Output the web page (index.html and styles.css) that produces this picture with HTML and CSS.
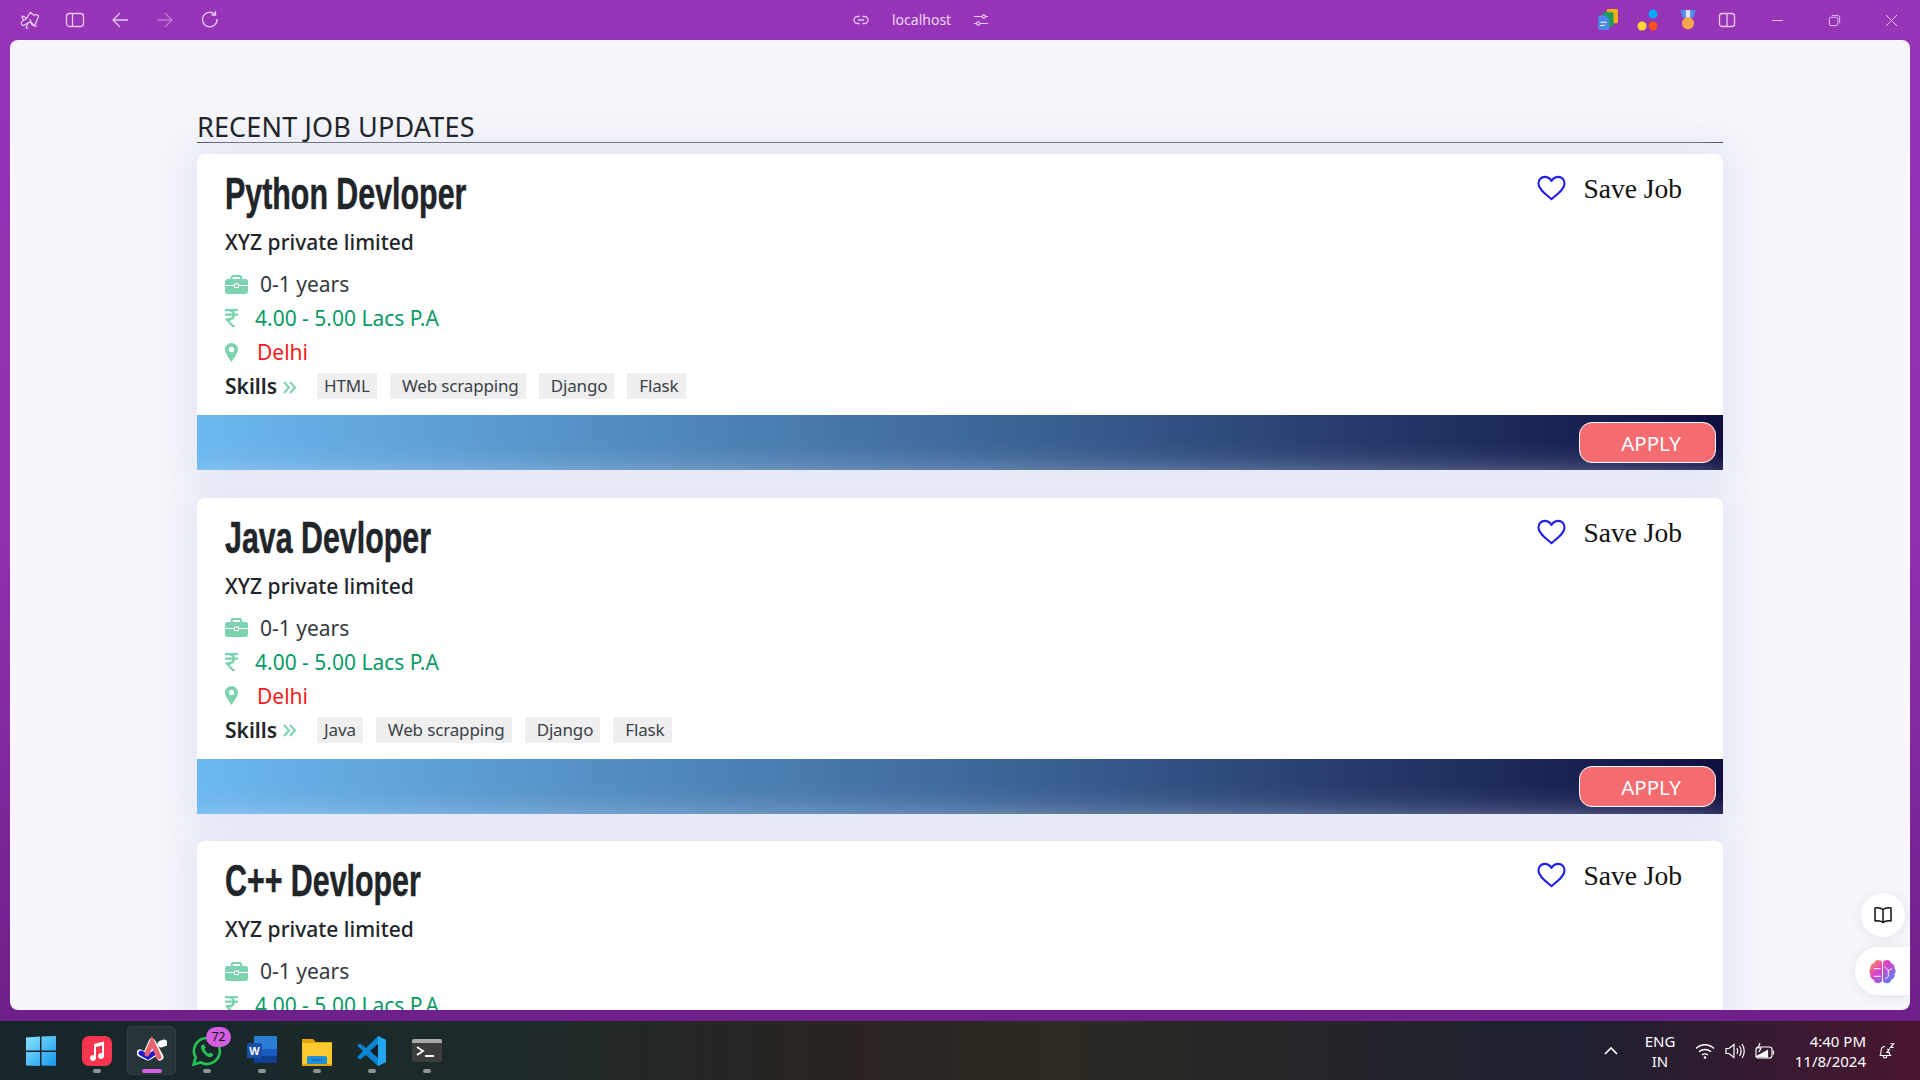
FILE: index.html
```html
<!DOCTYPE html>
<html lang="en">
<head>
    <meta charset="UTF-8">
    <meta name="viewport" content="width=device-width, initial-scale=1.0">
    <title>Job Updates</title>
    <link rel="stylesheet" href="styles.css">
</head>
<body>
    <svg class="defs" width="0" height="0">
        <defs>
            <linearGradient id="win-g" x1="0" y1="0" x2="1" y2="1"><stop offset="0" stop-color="#8be3fb"/><stop offset="1" stop-color="#1597f0"/></linearGradient>
        </defs>
        <symbol id="i-case" viewBox="0 0 23 19">
            <path d="M8 0h7c1.300 0 2.300 1 2.300 2.300V4h3.200C22 4 23 5 23 6.400V10h-9V8.500H9V10H0V6.400C0 5 1 4 2.500 4h3.200V2.300C5.700 1 6.700 0 8 0zm.3 2.100c-.4 0-.6.200-.6.600V4h7.600V2.700c0-.4-.2-.6-.6-.6H8.300zM0 11h9v2h5v-2h9v5.600c0 1.300-1 2.400-2.500 2.400h-18C1 19 0 17.900 0 16.600V11zm10-1.500h3V12h-3V9.500z"/>
        </symbol>
        <symbol id="i-rupee" viewBox="0 0 13 18">
            <path d="M0 0h13v2.200H8.700c.6.700 1 1.500 1.200 2.300H13v2.200H10c-.4 2.900-2.500 4.700-5.500 5l6 6.300H7.300L.8 11v-1.900h2.800c1.800 0 3.300-.8 3.700-2.400H0V4.500h7.200C6.700 3 5.300 2.200 3.600 2.200H0V0z"/>
        </symbol>
        <symbol id="i-pin" viewBox="0 0 13 19">
            <path d="M6.500 0C2.900 0 0 2.900 0 6.500 0 10 4 15.500 6.500 19 9 15.500 13 10 13 6.500 13 2.900 10.100 0 6.500 0zm0 9.200a2.700 2.700 0 1 1 0-5.400 2.700 2.700 0 0 1 0 5.400z"/>
        </symbol>
        <symbol id="i-heart" viewBox="0 0 30 26">
            <path d="M15 24.500C9 19.500 1.500 14.500 1.500 8.300 1.500 4.500 4.400 1.500 8 1.500c3 0 5.500 1.600 7 4.200 1.500-2.600 4-4.200 7-4.200 3.600 0 6.500 3 6.500 6.800 0 6.200-7.500 11.200-13.500 16.200z" fill="none" stroke="currentColor" stroke-width="2.200" stroke-linejoin="round"/>
        </symbol>
        <symbol id="i-angles" viewBox="0 0 13 13">
            <path d="M1 1l5 5.500L1 12M7 1l5 5.500L7 12" fill="none" stroke="currentColor" stroke-width="2"/>
        </symbol>
    </svg>

    <header class="toolbar">
        <div class="tool-group">
            <svg class="tool" viewBox="0 0 22 20" fill="none" stroke="currentColor" stroke-width="1.400" stroke-linejoin="round"><path d="M1.500 6c2-.5 4 .5 5.500 2.500L11.500 1.500l3.500 3 3-.5 2.500 1.500-3.500 9c-.8 2-3 2-4 .5L11 9"/><path d="M7 8.500c-2 1-5 2.500-5.500 4.500C1 15 3 17 5 15.500L9 13c3-2 5 1 7 3.500 1 1 2 .5 2.500-.5"/><path d="M2 6.500l2 3M9 13l-2 4.500c-1 1.500 1 2 2 1"/></svg>
            <svg class="tool" viewBox="0 0 20 20" fill="none" stroke="currentColor" stroke-width="1.300"><rect x="1.500" y="3.500" width="17" height="13" rx="3"/><path d="M7.500 3.500v13"/></svg>
            <svg class="tool" viewBox="0 0 20 20" fill="none" stroke="currentColor" stroke-width="1.300"><path d="M18 10H3M10 3l-7 7 7 7"/></svg>
            <svg class="tool dim" viewBox="0 0 20 20" fill="none" stroke="currentColor" stroke-width="1.300"><path d="M2 10h15M10 3l7 7-7 7"/></svg>
            <svg class="tool" viewBox="0 0 20 20" fill="none" stroke="currentColor" stroke-width="1.300"><path d="M15 4.500A7.300 7.300 0 1 0 17 9M15.500 1v4h-4"/></svg>
        </div>
        <div class="address">
            <svg class="tool-sm" viewBox="0 0 16 16" fill="none" stroke="currentColor" stroke-width="1.300"><path d="M6.500 4.500H4.500a3.500 3.500 0 0 0 0 7h2M9.500 4.500h2a3.500 3.500 0 0 1 0 7h-2M5 8h6"/></svg>
            <span class="host">localhost</span>
            <svg class="tool-sm" viewBox="0 0 16 16" fill="none" stroke="currentColor" stroke-width="1.200"><path d="M1 4.500h8M12.500 4.500H15M1 11.500h2.500M7 11.500h8"/><circle cx="10.700" cy="4.500" r="1.700"/><circle cx="5.200" cy="11.500" r="1.700"/></svg>
        </div>
        <div class="tool-group ext">
            <svg class="ext-icon" viewBox="0 0 20 20"><rect x="9" y="0" width="10" height="13" rx="1" fill="#f2b10f"/><rect x="5" y="3" width="10" height="13" rx="1" fill="#1b9e5a"/><path d="M1 6h7l3 3v10H2a1 1 0 0 1-1-1z" fill="#4a88ea"/><path d="M3 12h6M3 15h4" stroke="#fff"/></svg>
            <svg class="ext-icon" viewBox="0 0 22 22"><circle cx="16" cy="5" r="4.500" fill="#03a9f4"/><circle cx="5" cy="17" r="4.500" fill="#fdd835"/><circle cx="16" cy="17" r="4.500" fill="#f4511e"/></svg>
            <svg class="ext-icon" viewBox="0 0 18 20"><path d="M2 1h14l-2 7H4z" fill="#4d8fe8"/><path d="M7 1h4v7H7z" fill="#dbe8fb"/><circle cx="9" cy="13" r="5.500" fill="#f6a94a"/></svg>
            <svg class="tool" viewBox="0 0 20 20" fill="none" stroke="currentColor" stroke-width="1.300"><rect x="2.500" y="3.500" width="15" height="13" rx="2.500"/><path d="M10 3.500v13"/></svg>
            <svg class="tool win first" viewBox="0 0 14 14" fill="none" stroke="currentColor"><path d="M1 7h12"/></svg>
            <svg class="tool win" viewBox="0 0 14 14" fill="none" stroke="currentColor"><rect x="1.500" y="3.500" width="9" height="9" rx="1.500"/><path d="M4 1.500h6.500a2 2 0 0 1 2 2V10"/></svg>
            <svg class="tool win" viewBox="0 0 14 14" fill="none" stroke="currentColor"><path d="M1 1l12 12M13 1L1 13"/></svg>
        </div>
    </header>

    <main class="viewport">
        <div class="container">
            <h2 class="section-title">RECENT JOB UPDATES</h2>

            <article class="job-card">
                <div class="job-body">
                    <div class="job-head">
                        <h1 class="job-title"><span>Python Devloper</span></h1>
                        <a class="save-job"><svg class="heart"><use href="#i-heart"/></svg>Save Job</a>
                    </div>
                    <p class="company">XYZ private limited</p>
                    <p class="row"><svg class="ic ic-case"><use href="#i-case"/></svg><span class="years">0-1 years</span></p>
                    <p class="row"><svg class="ic ic-rupee"><use href="#i-rupee"/></svg><span class="salary">4.00 - 5.00 Lacs P.A</span></p>
                    <p class="row"><svg class="ic ic-pin"><use href="#i-pin"/></svg><span class="city">Delhi</span></p>
                    <div class="skills">
                        <b>Skills</b><svg class="angles"><use href="#i-angles"/></svg>
                        <span class="tag">HTML</span><span class="tag">Web scrapping</span><span class="tag">Django</span><span class="tag">Flask</span>
                    </div>
                </div>
                <div class="job-foot"><button class="apply">APPLY</button></div>
            </article>

            <article class="job-card">
                <div class="job-body">
                    <div class="job-head">
                        <h1 class="job-title"><span>Java Devloper</span></h1>
                        <a class="save-job"><svg class="heart"><use href="#i-heart"/></svg>Save Job</a>
                    </div>
                    <p class="company">XYZ private limited</p>
                    <p class="row"><svg class="ic ic-case"><use href="#i-case"/></svg><span class="years">0-1 years</span></p>
                    <p class="row"><svg class="ic ic-rupee"><use href="#i-rupee"/></svg><span class="salary">4.00 - 5.00 Lacs P.A</span></p>
                    <p class="row"><svg class="ic ic-pin"><use href="#i-pin"/></svg><span class="city">Delhi</span></p>
                    <div class="skills">
                        <b>Skills</b><svg class="angles"><use href="#i-angles"/></svg>
                        <span class="tag">Java</span><span class="tag">Web scrapping</span><span class="tag">Django</span><span class="tag">Flask</span>
                    </div>
                </div>
                <div class="job-foot"><button class="apply">APPLY</button></div>
            </article>

            <article class="job-card">
                <div class="job-body">
                    <div class="job-head">
                        <h1 class="job-title"><span>C++ Devloper</span></h1>
                        <a class="save-job"><svg class="heart"><use href="#i-heart"/></svg>Save Job</a>
                    </div>
                    <p class="company">XYZ private limited</p>
                    <p class="row"><svg class="ic ic-case"><use href="#i-case"/></svg><span class="years">0-1 years</span></p>
                    <p class="row"><svg class="ic ic-rupee"><use href="#i-rupee"/></svg><span class="salary">4.00 - 5.00 Lacs P.A</span></p>
                </div>
            </article>
        </div>

        <button class="float-btn book">
            <svg viewBox="0 0 20 20" fill="none" stroke="#111" stroke-width="1.500" stroke-linejoin="round"><path d="M10 4.500C8 3 5 2.500 2 3v13c3-.5 6 0 8 1.500 2-1.500 5-2 8-1.500V3c-3-.5-6 0-8 1.500zM10 4.500v13"/></svg>
        </button>
        <button class="float-btn brain">
            <svg viewBox="0 0 28 26">
                <defs><linearGradient id="brain-g" x1="0" y1="0" x2="1" y2="1"><stop offset="0" stop-color="#f9a03f"/><stop offset=".4" stop-color="#e23fc8"/><stop offset="1" stop-color="#3a8dfa"/></linearGradient></defs>
                <path d="M9 1c2 0 4 1 4.500 2v20c-1 2-3 2.500-5 2-2 0-3.500-2-3.500-3.500C2.500 21 1 18.500 1.500 16 0 14 0 11 1.500 9.500 1 7 2.500 5 5 4.500 5.500 2.500 7 1 9 1zM19 1c2 0 3.500 1.500 4 3.500 2.500.500 4 2.500 3.500 5 1.500 1.500 1.500 4.500 0 6.500.5 2.500-1 5-3.500 5.500 0 1.500-1.500 3.500-3.500 3.500-2 .5-4 0-5-2V3c.5-1 2.500-2 4.500-2z" fill="url(#brain-g)"/>
                <path d="M5 10h7M5 18h7M16 8l4 4 4-2M20 12v6l-3 3" stroke="#fff" stroke-width="1" fill="none"/>
            </svg>
        </button>
    </main>

    <footer class="taskbar">
        <div class="task-apps">
            <div class="app start">
                <svg viewBox="0 0 30 30"><path d="M0 1.500L14 .5v14H0zM15.500.5L30 0v14.500H15.500zM0 16h14v14l-14-.5zM15.500 16H30v14l-14.500-.5z" fill="url(#win-g)"/></svg>
            </div>
            <div class="app has-dot">
                <svg viewBox="0 0 30 30"><rect width="30" height="30" rx="7" fill="#f8354f"/><path d="M12 8l10-2.500v14.500a3 3 0 1 1-2-2.800V9.500l-6 1.500V22a3 3 0 1 1-2-2.800z" fill="#fff"/></svg>
                <i class="dot"></i>
            </div>
            <div class="app active">
                <svg viewBox="0 0 30 30"><path d="M3 17l8 4 5-3M9 20L15 6l8 15M24 8l3-1" fill="none" stroke="#fff" stroke-width="7" stroke-linecap="round" stroke-linejoin="round"/><path d="M4 17l7 4 6-4" fill="none" stroke="#1d17c8" stroke-width="5" stroke-linecap="round"/><path d="M10 18L15 6l7 15" fill="none" stroke="#e9606e" stroke-width="5" stroke-linecap="round"/></svg>
                <i class="dot pink"></i>
            </div>
            <div class="app has-dot">
                <svg viewBox="0 0 30 30"><path d="M15 2a13 13 0 0 0-11.300 19.500L1.500 28.500l7.300-2A13 13 0 1 0 15 2z" fill="none" stroke="#25c354" stroke-width="2.600"/><path d="M10 9c-2 2-1 5 2 8.500s6 4.500 8 3l1.500-2-3.500-2-1.500 1.200c-2-1-3.500-3-4-4.700l1.200-1.300-1.500-3.500z" fill="#25c354"/></svg>
                <span class="count">72</span>
                <i class="dot"></i>
            </div>
            <div class="app has-dot">
                <svg viewBox="0 0 30 30"><rect x="7" y="0" width="23" height="26" rx="1" fill="#2b7cd3"/><rect x="7" y="13" width="23" height="7" fill="#185abd"/><rect x="7" y="20" width="23" height="7" fill="#103f91"/><rect x="0" y="7" width="15" height="15" rx="1.500" fill="#1a4fa8"/><text x="7.500" y="19" class="word-w">W</text></svg>
                <i class="dot"></i>
            </div>
            <div class="app has-dot">
                <svg viewBox="0 0 30 30"><path d="M0 3h11l3 3h16v24H0z" fill="#e5a50a"/><path d="M0 7h30v20a1 1 0 0 1-1 1H1a1 1 0 0 1-1-1z" fill="#fdc92e"/><path d="M5 28v-6a2 2 0 0 1 2-2h16a2 2 0 0 1 2 2v6z" fill="#1f8fd8"/><path d="M10 24h10" stroke="#0f5c9a"/></svg>
                <i class="dot"></i>
            </div>
            <div class="app has-dot">
                <svg viewBox="0 0 30 30"><path d="M21 0l8 4v22l-8 4-12-11-6 4.500-3-2L6 15 0 9.500l3-2L9 12z" fill="#0a84d0"/><path d="M21 0l8 4v22l-8 4z" fill="#22a6ef"/><path d="M21 8l-8 7 8 7z" fill="#141d22"/></svg>
                <i class="dot"></i>
            </div>
            <div class="app has-dot">
                <svg viewBox="0 0 30 30"><rect y="3" width="30" height="23" rx="2" fill="#3c3c3c"/><path d="M0 5a2 2 0 0 1 2-2h26a2 2 0 0 1 2 2v2H0z" fill="#a9a9a9"/><path d="M5 11l6 4-6 4" fill="none" stroke="#fff" stroke-width="1.800"/><path d="M13 20h9" stroke="#fff" stroke-width="2"/></svg>
                <i class="dot"></i>
            </div>
        </div>
        <div class="tray">
            <svg class="tray-chev" viewBox="0 0 16 10" fill="none" stroke="#fff" stroke-width="1.600"><path d="M2 8l6-6 6 6"/></svg>
            <div class="lang">ENG<br>IN</div>
            <svg class="tray-ic" viewBox="0 0 20 18" fill="none" stroke="#fff" stroke-width="1.400"><path d="M1 6.500c5-5 13-5 18 0M4 9.800c3.500-3 8.500-3 12 0M7 13c2-1.500 4-1.500 6 0"/><circle cx="10" cy="15.500" r="1.300" fill="#fff" stroke="none"/></svg>
            <svg class="tray-ic" viewBox="0 0 20 18" fill="none" stroke="#fff" stroke-width="1.200"><path d="M1 6.500v5h3l5 4v-13l-5 4zM12 6c1 2 1 4 0 6M14.500 4c2 3 2 7 0 10M17 2c3 4 3 10 0 14"/></svg>
            <svg class="tray-ic" viewBox="0 0 20 18" fill="none" stroke="#fff" stroke-width="1.200"><rect x="1" y="5" width="16" height="11" rx="2.500"/><path d="M1.500 14.500l11-6V15z" fill="#fff"/><path d="M18.500 8.500v4"/><path d="M5 1L3 6h3l-2 4"/></svg>
            <div class="clock">4:40 PM<br>11/8/2024</div>
            <svg class="tray-ic bell" viewBox="0 0 20 20" fill="none" stroke="#fff" stroke-width="1.200"><path d="M3 15c1.500-1 1.500-3 1.500-5 0-3 2-5 4.500-5M3 15h12c-1-1-1.500-2-1.500-4M7 15.500c0 3 4 3 4 0"/><path d="M11 8h3l-3 3.500h3M15 2h3.500L15 6h3.500"/></svg>
        </div>
    </footer>
</body>
</html>
```

FILE: styles.css
```css
* {
    box-sizing: border-box;
}

html, body {
    height: 100%;
}

body {
    margin: 0;
    width: 1920px;
    height: 1080px;
    overflow: hidden;
    display: flex;
    flex-direction: column;
    font-family: "Noto Sans", "Open Sans", sans-serif;
    color: #212529;
    background: linear-gradient(180deg, #9734b8 0%, #9030b0 50%, #6a1d85 100%);
}

.defs {
    position: absolute;
}

/* browser bar */
.toolbar {
    height: 40px;
    flex: none;
    display: flex;
    align-items: center;
    color: #e6c8f0;
    padding-left: 20px;
}

.tool-group {
    display: flex;
    align-items: center;
    gap: 25px;
}

.tool {
    width: 20px;
    height: 20px;
}

.tool.dim {
    opacity: .45;
}

.address {
    display: flex;
    align-items: center;
    margin-left: 633px;
}

.tool-sm {
    width: 16px;
    height: 16px;
}

.host {
    font-size: 14px;
    margin: 0 22px 2px 23px;
    color: #ecd8f3;
}

.ext {
    margin-left: auto;
    margin-right: 22px;
    gap: 18px;
}

.ext-icon {
    width: 22px;
    height: 22px;
}

.tool.win {
    width: 13px;
    height: 13px;
    margin-left: 26px;
}

.tool.win.first {
    margin-left: 16px;
}

/* page area */
.viewport {
    position: relative;
    flex: none;
    height: 970px;
    margin: 0 10px;
    border-radius: 8px;
    overflow: hidden;
    background: #f7f7fb;
}

.container {
    width: 1526px;
    margin-left: 187px;
    padding-top: 71px;
}

.section-title {
    margin: 0 0 11px;
    height: 32px;
    font-size: 27px;
    line-height: 31px;
    font-weight: 400;
    letter-spacing: .15px;
    color: #212529;
    border-bottom: 1px solid #000;
}

.job-card {
    height: 316px;
    margin-bottom: 27.600px;
    background: #fff;
    border-radius: 8px 8px 0 0;
    overflow: hidden;
    box-shadow: 0 0 40px 12px #e2e5f4;
}

.job-card:last-child {
    height: 400px;
}

.job-body {
    height: 261px;
    padding: 0 27px 0 28px;
}

.job-head {
    height: 74px;
    display: flex;
    justify-content: space-between;
    align-items: flex-start;
}

.job-title {
    margin: 10px 0 0;
    font-family: "Liberation Sans", sans-serif;
    font-size: 45px;
    line-height: 60px;
    font-weight: 700;
    color: #212529;
}

.job-title span {
    display: inline-block;
    transform: scaleX(.675);
    transform-origin: left center;
    white-space: nowrap;
    -webkit-text-stroke: .5px #212529;
}

.save-job {
    display: flex;
    align-items: center;
    height: 40px;
    margin: 15px 14px 0 0;
    font-family: "Liberation Serif", serif;
    font-size: 27.500px;
    color: #111;
}

.heart {
    width: 29px;
    height: 26px;
    margin: 0 17px 2px 0;
    color: #2222e6;
}

.company {
    margin: 0 0 10px;
    font-size: 21px;
    line-height: 29px;
    font-weight: 500;
}

.row {
    display: flex;
    align-items: center;
    height: 34px;
    margin: 0;
    font-size: 21px;
}

.ic {
    fill: #7dd3ae;
    flex: none;
}

.ic-case {
    width: 23px;
    height: 19px;
    margin-right: 12px;
}

.ic-rupee {
    width: 13px;
    height: 18px;
    margin-right: 17px;
}

.ic-pin {
    width: 13px;
    height: 19px;
    margin-right: 19px;
}

.years {
    color: #343a40;
}

.salary {
    color: #0a9a68;
}

.city {
    color: #f81a1a;
}

.skills {
    display: flex;
    align-items: center;
    height: 34px;
    font-size: 21px;
}

.skills b {
    font-weight: 600;
}

.angles {
    width: 13px;
    height: 13px;
    margin: 2px 21px 0 6px;
    color: #7dd3ae;
}

.tag {
    height: 26px;
    line-height: 26px;
    padding: 0 7px 0 12px;
    margin-right: 13px;
    font-size: 17px;
    letter-spacing: -.15px;
    color: #3b4148;
    background: #efefef;
}

.tag:first-of-type {
    padding-left: 7px;
}

.job-foot {
    height: 55px;
    display: flex;
    align-items: center;
    justify-content: flex-end;
    padding-right: 7px;
    background: linear-gradient(90deg, #6bb8f0 0%, #3f6a9c 50%, #0f1040 100%);
}

.apply {
    width: 137px;
    height: 41px;
    border: 1px solid #fff;
    border-radius: 13px;
    padding: 1px 0 0 7px;
    background: #f56c70;
    color: #fff;
    font-family: "Noto Sans", sans-serif;
    font-size: 20.500px;
    cursor: pointer;
}

.float-btn {
    position: absolute;
    border: none;
    background: #fff;
    display: flex;
    align-items: center;
    justify-content: center;
    box-shadow: 0 2px 14px rgba(0, 0, 0, .08);
}

.book {
    right: 5px;
    top: 853px;
    width: 44px;
    height: 44px;
    border-radius: 50%;
}

.book svg {
    width: 20px;
    height: 20px;
}

.brain {
    right: 0;
    top: 907px;
    width: 55px;
    height: 48px;
    border-radius: 24px 0 0 24px;
    padding: 0;
}

.brain svg {
    width: 27px;
    height: 25px;
}

/* windows taskbar */
.taskbar {
    position: relative;
    flex: none;
    height: 59px;
    margin-top: 11px;
    display: flex;
    align-items: center;
    justify-content: space-between;
    color: #fff;
    background: linear-gradient(90deg, #16262a 0%, #1c2a2a 25%, #2a2320 45%, #2c2a22 55%, #1d2030 82%, #4a1530 100%);
}

.task-apps {
    display: flex;
    padding-left: 16px;
    gap: 6px;
}

.app {
    position: relative;
    width: 49px;
    height: 49px;
    display: flex;
    align-items: center;
    justify-content: center;
    border-radius: 5px;
}

.app.start {
    margin-right: 1px;
}

.app svg {
    width: 30px;
    height: 30px;
}

.app.active {
    background: #263537;
    box-shadow: inset 0 0 0 1px #2f3f41;
}

.dot {
    position: absolute;
    left: 21px;
    bottom: 2px;
    width: 8px;
    height: 4px;
    border-radius: 2px;
    background: #8f9694;
}

.dot.pink {
    left: 15px;
    width: 20px;
    background: #d35ee0;
}

.count {
    position: absolute;
    right: 0;
    top: 1px;
    width: 25px;
    height: 20px;
    border-radius: 10px;
    background: #d35ee0;
    color: #111;
    font-size: 12px;
    line-height: 20px;
    text-align: center;
}

.word-w {
    fill: #fff;
    font-family: "Liberation Sans", sans-serif;
    font-size: 11px;
    font-weight: 700;
    text-anchor: middle;
}

.tray {
    display: flex;
    align-items: center;
    padding-right: 24px;
    font-size: 15px;
    line-height: 20px;
}

.tray-chev {
    width: 16px;
    height: 10px;
    margin-right: 17px;
}

.lang {
    width: 48px;
    text-align: center;
    margin-right: 11px;
}

.tray-ic {
    width: 20px;
    height: 18px;
    margin-right: 10px;
}

.clock {
    width: 80px;
    text-align: right;
    margin-left: 1px;
    margin-right: 10px;
}

.tray-ic.bell {
    margin: 0;
}
```
